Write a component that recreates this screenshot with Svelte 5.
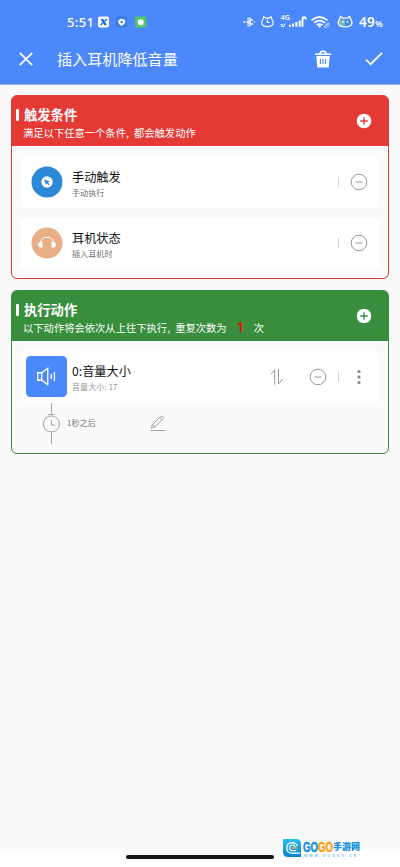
<script lang="ts">
  const triggers = [
    { icon: 'pointer', name: '手动触发', detail: '手动执行' },
    { icon: 'headset', name: '耳机状态', detail: '插入耳机时' }
  ];

  const action = { name: '0:音量大小', detail: '音量大小: 17', delay: '1秒之后' };
  const repeatCount = 1;
</script>

{#snippet addButton(color: string)}
  <svg class="add" viewBox="0 0 16 16">
    <circle cx="8" cy="8" r="7.3" fill="#fff" />
    <path d="M8 4.3v7.4M4.3 8h7.4" stroke={color} stroke-width="1.3" />
  </svg>
{/snippet}

{#snippet minus()}
  <svg class="minus" viewBox="0 0 18 18">
    <circle cx="9" cy="9" r="7.8" />
    <path d="M5.5 9h7" />
  </svg>
{/snippet}

<div class="screen">
  <header>
    <div class="status">
      <span class="time">5:51</span>
      <svg class="apps" viewBox="0 0 50 14">
        <rect x="0" y="1.5" width="11" height="11" rx="2" fill="#fff" />
        <path d="M2.6 4H5l3.9 6.2H6.5z" fill="#155bd0" />
        <path d="M8.7 4L6.7 6.4M4.6 7.8L2.8 10.2" stroke="#168be8" stroke-width="1.7" />
        <rect x="18" y="1.5" width="11" height="11" rx="2" fill="#347bdc" />
        <path d="M20.3 4.7q2 0 3.4-1.2q1.4 1.2 3.4 1.2v3q-.5 2-3.4 3.2q-2.9-1.2-3.4-3.2z" fill="#fff" />
        <circle cx="23.7" cy="7" r="1.2" fill="#347bdc" />
        <rect x="37" y="1.5" width="11.5" height="11" rx="2" fill="#50c860" />
        <path d="M42.7 3.7l1.1 1.1h1.6v1.6l1 .9l-1 .8v1.6h-1.6l-1.1 1.1l-1.1-1.1H40V8.1l-1-.8l1-.9V4.8h1.6z" fill="#fff" />
      </svg>
      <svg class="system" viewBox="0 0 114 18">
        <g fill="#fff">
          <circle cx="1.4" cy="9" r="1" />
          <path d="M3 9l5-4.7v9.4z" opacity=".8" />
          <path d="M4 6l3-1.3M4 12l3 1.3" stroke="#fff" />
          <circle cx="9" cy="7" r="1" /><circle cx="9" cy="11" r="1" /><circle cx="11.3" cy="9" r=".8" />
        </g>
        <path d="M21 6.2l.7-2.3l2.4 1.2h2.6l2.4-1.2l.7 2.3q2 2 1.1 4.8q-1.2 2.6-5.5 2.6T19.9 11q-.9-2.8 1.1-4.8zM25.4 6.8v2.7h2.2" transform="translate(-1 0)" fill="none" stroke="#fff" stroke-width="1.2" />
        <text x="37.8" y="7.4" class="net">4G</text>
        <path d="M37.5 11.8h2l1-1M42 10.8l-1 2.2M38 13.4h3.2" stroke="#fff" stroke-width="1" fill="none" />
        <path d="M46.9 13.7v-2M50.1 13.7v-3.3M53.4 13.7V9M56.7 13.7V7.5" stroke="#fff" stroke-width="2" />
        <path d="M59.5 13.7V5.8q0-1.5 1.8-1.5q1.4 0 1.4 1.2v1" stroke="#fff" stroke-width="1.9" fill="none" />
        <path d="M68.5 7.3q7.9-6.6 16 0M71.2 9.8q5.4-4.4 10.7 0M73.7 12.1q2.9-2.2 5.8 0" fill="none" stroke="#fff" stroke-width="1.7" />
        <circle cx="76.6" cy="13.3" r="1.2" fill="#fff" />
        <path d="M81 13.5l3.5-3q2-1 2 1l-3 3q-2 .7-2.5-1M82.5 13l2.5-2" fill="none" stroke="#c8dbff" stroke-width="1" />
        <path d="M97.5 6.2q-2.5 2-2.5 4q0 3.6 3.5 3.6h3.5V7z" fill="#79b9b4" />
        <path d="M97.2 6.2l.9-2.7l2.8 1.6h3.6l2.8-1.6l.9 2.7q2 2.4 1 5q-1.3 2.7-6.5 2.7t-6.5-2.7q-1-2.6 1-5z" transform="translate(-.6 0)" fill="none" stroke="#fff" stroke-width="1.3" />
        <circle cx="100" cy="8.8" r=".9" fill="#fff" /><circle cx="104.5" cy="8.8" r=".9" fill="#fff" />
      </svg>
      <span class="battery">49<small>%</small></span>
    </div>
    <nav>
      <svg class="close" viewBox="0 0 14 14"><path d="M.8.8l12.4 12.4M13.2.8L.8 13.2" /></svg>
      <h1>插入耳机降低音量</h1>
      <svg class="trash" viewBox="0 0 18 18">
        <path d="M1 4.2h16M6 3.8q0-2.5 3-2.5t3 2.5" fill="none" stroke="#fff" stroke-width="1.5" />
        <path d="M2.3 6h13.4l-1 11.5H3.3z" fill="#fff" />
        <path d="M6.4 9v5M9 9v5M11.6 9v5" stroke="#4b88fb" stroke-width="1.1" />
      </svg>
      <svg class="check" viewBox="0 0 18 14"><path d="M.9 7.5l4.7 4.7L17.1.9" /></svg>
    </nav>
  </header>

  <main>
    <section class="panel red">
      <div class="panel-head">
        <div>
          <h2>触发条件</h2>
          <p>满足以下任意一个条件<i>,</i>都会触发动作</p>
        </div>
        {@render addButton('#e53935')}
      </div>
      <div class="cards">
        {#each triggers as trigger}
          <article class="card">
            {#if trigger.icon === 'pointer'}
              <svg class="avatar" viewBox="0 0 32 32">
                <circle cx="16" cy="16" r="15.5" fill="#2b89d8" />
                <circle cx="16" cy="16" r="5.7" fill="#fff" />
                <path d="M13.2 13.4l5.8 2l-2.1 1.1l1.8 2l-.9.8l-1.8-2l-1.1 1.6z" fill="#2b89d8" />
              </svg>
            {:else}
              <svg class="avatar" viewBox="0 0 32 32">
                <circle cx="16" cy="16" r="15.5" fill="#e8af87" />
                <path d="M9.2 16.5q.6-6.2 6.8-6.2t6.8 6.2" fill="none" stroke="#fff" stroke-width="1" />
                <path d="M11.4 14.8v6q-4.4-.2-4.4-3t4.4-3zM20.6 14.8v6q4.4-.2 4.4-3t-4.4-3z" fill="#fff" />
              </svg>
            {/if}
            <div class="info">
              <h3>{trigger.name}</h3>
              <small>{trigger.detail}</small>
            </div>
            <span class="divider"></span>
            {@render minus()}
          </article>
        {/each}
      </div>
    </section>

    <section class="panel green">
      <div class="panel-head">
        <div>
          <h2>执行动作</h2>
          <p>以下动作将会依次从上往下执行<i>,</i>重复次数为<b>{repeatCount}</b>次</p>
        </div>
        {@render addButton('#388e3c')}
      </div>
      <div class="cards">
        <article class="card action">
          <svg class="tile" viewBox="0 0 41 41">
            <rect width="41" height="41" rx="4.5" fill="#4b88fb" />
            <path d="M11.7 16.8h4l6-4.5v16.4l-6-4.5h-4zM15.7 16.8v7.4M25.3 18v5M28.4 16v9" fill="none" stroke="#fff" stroke-width="1.4" />
          </svg>
          <div class="info">
            <h3>{action.name}</h3>
            <small>{action.detail}</small>
          </div>
          <svg class="sort" viewBox="0 0 14 18"><path d="M1 6.2L4.7 1.8v14.9M8.5 1v14.9L12.6 11" /></svg>
          {@render minus()}
          <span class="divider"></span>
          <svg class="more" viewBox="0 0 4 16">
            <circle cx="2" cy="2.5" r="1.6" /><circle cx="2" cy="8" r="1.6" /><circle cx="2" cy="13.5" r="1.6" />
          </svg>
        </article>
        <div class="delay">
          <svg class="clock" viewBox="0 0 18 42">
            <path d="M9.5 0v10.5M5.7 11.6h7M9.5 30v11" />
            <circle cx="9.5" cy="21" r="8" />
            <path d="M9.5 17v5h3.7" />
          </svg>
          <span>{action.delay}</span>
          <svg class="pencil" viewBox="0 0 16 17">
            <path d="M.5 15.5h15.2M1.3 13.2l1.2-3.8L11 1.4q1-.7 2 .3t.3 2L5 11.8zM2.5 9.4L5 11.8M9.8 2.6l2.2 2.2" />
          </svg>
        </div>
      </div>
    </section>
  </main>

  <footer>
    <span class="home"></span>
    <div class="brand">
      <svg viewBox="0 0 18 18">
        <defs>
          <linearGradient id="brand-blue" x1="0" y1="0" x2="0" y2="1">
            <stop offset="0" stop-color="#27c1ef" /><stop offset="1" stop-color="#087fd0" />
          </linearGradient>
        </defs>
        <path d="M0 0h13q5 0 5 5v13H5q-5 0-5-5z" fill="url(#brand-blue)" />
        <path d="M14.5 7Q13 3.6 9 3.6Q3.8 3.8 3.8 9T9 14.2h8" fill="none" stroke="#fff" stroke-width="1.3" />
        <path d="M12.4 8q-1-2-3.2-2Q6.6 6.3 6.6 9t2.8 2.7h4" fill="none" stroke="#fff" stroke-width="1.1" />
        <path d="M8.8 9h5" fill="none" stroke="#ffb32d" stroke-width="1.5" />
      </svg>
      <div class="brand-text">
        <div class="brand-name">
          <span class="latin">GO<em>GO</em></span>
          <span class="hanzi">手游网</span>
        </div>
        <small>WWW.GOGGO.CN</small>
      </div>
    </div>
  </footer>
</div>

<style>
  :global(body) {
    margin: 0;
    background: #fafafa;
  }

  .screen {
    height: 867px;
    display: flex;
    flex-direction: column;
    overflow: hidden;
    background: #fafafa;
    font-family: 'Noto Sans CJK SC', sans-serif;
  }

  svg {
    display: block;
    flex: none;
  }

  h1, h2, h3, p {
    margin: 0;
  }

  header {
    height: 85px;
    flex: none;
    box-sizing: border-box;
    background: #4b88fb;
    border-bottom: 1px solid #8fb4fb;
    color: #fff;
  }

  .status {
    height: 35px;
    padding: 9px 0 0 67px;
    box-sizing: border-box;
    display: flex;
    align-items: center;
    font-family: 'Noto Sans', sans-serif;
    font-weight: 500;
  }

  .time {
    width: 31px;
    font-size: 13px;
    letter-spacing: 0.4px;
  }

  .apps {
    width: 50px;
    height: 14px;
  }

  .system {
    width: 114px;
    height: 18px;
    margin-left: 95px;
  }

  .net {
    font: 600 7px 'Noto Sans', sans-serif;
    fill: #fff;
  }

  .battery {
    margin-left: 2px;
    font-size: 13.5px;
    font-weight: 600;
    letter-spacing: 0.4px;
    white-space: nowrap;
  }

  .battery small {
    font-size: 8.5px;
  }

  nav {
    height: 49px;
    padding: 0 17px 0 19px;
    display: flex;
    align-items: center;
  }

  nav svg {
    margin-top: -1px;
  }

  h1 {
    margin: -3px 0 0 24px;
    flex: 1;
    font-size: 15.1px;
    font-weight: 400;
    line-height: 22px;
  }

  .close {
    width: 14px;
    height: 14px;
  }

  .close path,
  .check path {
    fill: none;
    stroke: #fff;
    stroke-width: 1.7;
  }

  .trash {
    width: 18px;
    height: 18px;
    margin-right: 33px;
  }

  .check {
    width: 18px;
    height: 14px;
  }

  main {
    flex: 1;
    padding: 10px 11px 0;
    display: flex;
    flex-direction: column;
    gap: 11px;
  }

  .panel {
    --tone: #e53935;
    border: 1px solid var(--tone);
    border-radius: 6px;
    box-sizing: border-box;
    overflow: hidden;
    background: linear-gradient(var(--tone) 50px, transparent 50px);
  }

  .green {
    --tone: #388e3c;
    height: 164px;
  }

  .red {
    height: 184px;
  }

  .panel-head {
    height: 50px;
    padding: 0 17px 0 4px;
    color: #fff;
    display: flex;
    align-items: center;
    justify-content: space-between;
  }

  h2 {
    display: flex;
    align-items: center;
    gap: 5px;
    font-size: 13.3px;
    font-weight: 600;
    line-height: 18px;
    padding-top: 5px;
  }

  h2::before {
    content: '';
    width: 3px;
    height: 12px;
    border-radius: 1px;
    background: #fff;
  }

  p {
    display: flex;
    margin-left: 7px;
    font-size: 10.3px;
    line-height: 18px;
    white-space: nowrap;
  }

  p i {
    width: 8px;
    font-style: normal;
  }

  p b {
    width: 27px;
    text-align: center;
    color: #e01008;
    font: 600 14px/15px 'Noto Sans', sans-serif;
  }

  .add {
    width: 16px;
    height: 16px;
    margin-right: -1px;
  }

  .cards {
    padding: 10px 9px 0;
    display: flex;
    flex-direction: column;
    gap: 10px;
  }

  .card {
    height: 51.5px;
    padding: 0 11px 0 9.5px;
    box-sizing: border-box;
    display: flex;
    align-items: center;
    background: #fff;
    border-radius: 5px;
  }

  .avatar {
    width: 32px;
    height: 32px;
  }

  .info {
    margin-left: 9.5px;
    padding-top: 5px;
    flex: 1;
  }

  h3 {
    font-size: 12.2px;
    font-weight: 400;
    line-height: 17px;
    color: #111;
  }

  .info small {
    display: block;
    font-size: 8.1px;
    line-height: 14px;
    color: #707070;
  }

  .divider {
    width: 1px;
    height: 10px;
    background: #d4d4d4;
  }

  .minus {
    width: 18px;
    height: 18px;
    margin-left: 11px;
    fill: none;
    stroke: #999;
    stroke-width: 1;
  }

  .action {
    padding: 0 18.5px 0 5px;
  }

  .tile {
    width: 41px;
    height: 41px;
  }

  .action .info {
    margin-left: 5px;
    padding-top: 4px;
  }

  .action .info small {
    color: #999;
  }

  .sort {
    width: 14px;
    height: 18px;
    margin-right: 14px;
    fill: none;
    stroke: #999;
    stroke-width: 1;
  }

  .action .divider {
    margin: 0 18px 0 11px;
  }

  .more {
    width: 4px;
    height: 16px;
    fill: #888;
  }

  .delay {
    margin-top: -10px;
    padding-left: 21px;
    display: flex;
    align-items: center;
  }

  .delay span {
    width: 76px;
    margin: -2px 0 0 7px;
    font-size: 8.1px;
    color: #777;
  }

  .clock {
    width: 18px;
    height: 42px;
    fill: none;
    stroke: #999;
    stroke-width: 0.9;
  }

  .pencil {
    width: 16px;
    height: 17px;
    margin-left: 7px;
    fill: none;
    stroke: #999;
    stroke-width: 0.9;
  }

  footer {
    height: 29px;
    display: flex;
    align-items: flex-end;
    padding-left: 126px;
    background: linear-gradient(#fafafa 13px, #fff 13px);
  }

  .home {
    width: 148px;
    height: 4px;
    margin-bottom: 8px;
    border-radius: 2px;
    background: #171717;
  }

  .brand {
    height: 29px;
    margin-left: 9px;
    display: flex;
    gap: 2px;
  }

  .brand > svg {
    width: 18px;
    height: 18px;
    margin-top: 1px;
  }

  .brand-name {
    height: 15px;
    margin-top: 1px;
    display: flex;
    align-items: center;
  }

  .latin {
    width: 30px;
    font: 700 15.5px/15px 'Liberation Sans', sans-serif;
    color: #168fda;
    -webkit-text-stroke: 0.5px;
    transform: scaleX(0.625);
    transform-origin: left;
  }

  .latin em {
    font-style: normal;
    color: #ff9d12;
  }

  .hanzi {
    font-size: 9px;
    font-weight: 900;
    line-height: 13px;
    color: #168fda;
    white-space: nowrap;
  }

  .brand-text small {
    display: block;
    margin-left: 1px;
    font: 600 3.5px/4px 'Liberation Sans', sans-serif;
    letter-spacing: 2px;
    color: #70bde6;
    white-space: nowrap;
  }
</style>
